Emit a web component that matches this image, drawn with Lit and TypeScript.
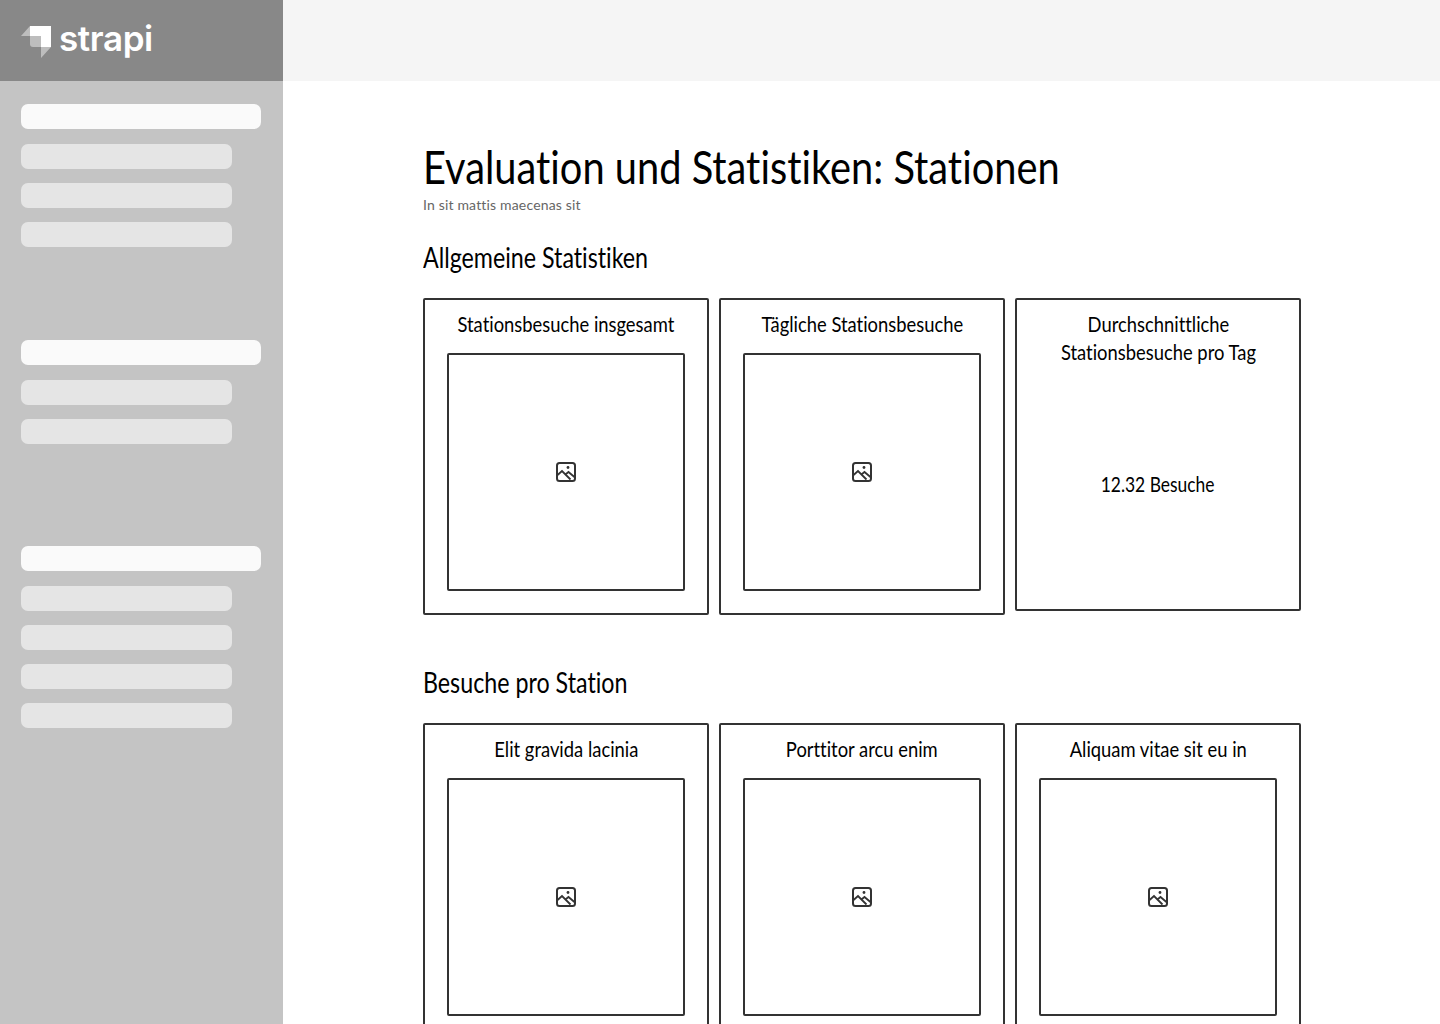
import { LitElement, html, css, svg } from "lit";
import { customElement } from "lit/decorators.js";

const imageIcon = svg`
  <svg class="icon" width="22" height="22" viewBox="0 0 22 22" fill="none" stroke="#333" stroke-width="2">
    <rect x="2" y="2" width="18" height="18" rx="2.5"></rect>
    <path d="M2 14.5 L7 10 L15.5 18.5 M11 13 L13.5 11 L20 16.5" stroke-width="1.8"></path>
    <circle cx="13" cy="6.5" r="1.4" fill="#333" stroke="none"></circle>
  </svg>
`;

type Card = { title: string; value?: string };

const general: Card[] = [
  { title: "Stationsbesuche insgesamt" },
  { title: "Tägliche Stationsbesuche" },
  { title: "Durchschnittliche\nStationsbesuche pro Tag", value: "12.32 Besuche" },
];

const perStation: Card[] = [
  { title: "Elit gravida lacinia" },
  { title: "Porttitor arcu enim" },
  { title: "Aliquam vitae sit eu in" },
];

@customElement("app-root")
export class AppRoot extends LitElement {
  static styles = css`
    :host {
      display: grid;
      grid-template-columns: 283px 1fr;
      grid-template-rows: 81px 1fr;
      height: 1024px;
      overflow: hidden;
      font-family: "Lato", "Noto Sans", sans-serif;
      font-variant-ligatures: none;
      color: #000;
      background: #fff;
    }
    .brand {
      display: flex;
      align-items: center;
      gap: 7px;
      padding: 0 0 5px 21px;
      background: #888;
    }
    .brand svg {
      margin-top: 10px;
    }
    .wordmark {
      font-family: "Inter", sans-serif;
      font-size: 35px;
      font-weight: 600;
      letter-spacing: -0.4px;
      line-height: 1;
      color: #fff;
    }
    .topbar {
      background: #f5f5f5;
    }
    .side {
      display: flex;
      flex-direction: column;
      padding: 23px 0 0 21px;
      background: #c4c4c4;
    }
    .group {
      display: flex;
      flex-direction: column;
      gap: 14px;
    }
    .group.second {
      margin-top: 93px;
    }
    .group.third {
      margin-top: 102px;
    }
    .bar {
      width: 211px;
      height: 25px;
      border-radius: 7px;
      background: #e5e5e5;
    }
    .bar.head {
      width: 240px;
      margin-bottom: 1px;
      background: #fafafa;
    }
    main {
      display: flex;
      flex-direction: column;
      width: 878px;
      padding: 61px 0 0 140px;
    }
    /* the reference hand font is much narrower than anything installed */
    h1 {
      margin: 0;
      font-size: 46px;
      font-weight: 400;
      line-height: 50px;
      white-space: nowrap;
      transform: scaleX(0.865);
      transform-origin: left;
    }
    .sub {
      margin-top: 3px;
      font-size: 14px;
      line-height: 20px;
      letter-spacing: 0.17px;
      color: #666;
    }
    h2 {
      margin: 22px 0 0;
      font-size: 28px;
      font-weight: 400;
      line-height: 40px;
      white-space: nowrap;
      transform: scaleX(0.83);
      transform-origin: left;
    }
    h2.next {
      margin-top: 47px;
    }
    .cards {
      display: grid;
      grid-template-columns: repeat(3, 286px);
      gap: 10px;
      align-items: start;
      margin-top: 21px;
    }
    .card {
      box-sizing: border-box;
      display: flex;
      flex-direction: column;
      align-items: center;
      height: 317px;
      padding: 10px 22px 0;
      border: 2px solid #333;
      border-radius: 2px;
    }
    .card.stat {
      height: 313px;
    }
    .title {
      font-size: 21px;
      line-height: 28px;
      text-align: center;
      white-space: pre;
      transform: scaleX(0.875);
    }
    .picture {
      box-sizing: border-box;
      display: flex;
      align-items: center;
      justify-content: center;
      width: 238px;
      height: 238px;
      margin-top: 15px;
      border: 2px solid #333;
      border-radius: 2px;
    }
    .value {
      margin-top: 104px;
      font-size: 21px;
      line-height: 28px;
      transform: scaleX(0.83);
    }
  `;

  private renderCard(card: Card) {
    if (card.value) {
      return html`
        <div class="card stat">
          <div class="title">${card.title}</div>
          <div class="value">${card.value}</div>
        </div>
      `;
    }
    return html`
      <div class="card">
        <div class="title">${card.title}</div>
        <div class="picture">${imageIcon}</div>
      </div>
    `;
  }

  render() {
    return html`
      <div class="brand">
        <svg width="31" height="36" viewBox="0 0 31 36">
          <path d="M9 1 H30 V22 H20 V11 H9 Z" fill="#fff"></path>
          <path d="M9 1 V11 H0 Z" fill="#fff" opacity="0.45"></path>
          <path d="M9 11 H20 V22 H12 Q9 22 9 19 Z" fill="#fff" opacity="0.45"></path>
          <path d="M20 22 H30 L20 33 Z" fill="#fff" opacity="0.45"></path>
        </svg>
        <span class="wordmark">strapi</span>
      </div>
      <div class="topbar"></div>
      <nav class="side">
        <div class="group">
          <div class="bar head"></div>
          <div class="bar"></div>
          <div class="bar"></div>
          <div class="bar"></div>
        </div>
        <div class="group second">
          <div class="bar head"></div>
          <div class="bar"></div>
          <div class="bar"></div>
        </div>
        <div class="group third">
          <div class="bar head"></div>
          <div class="bar"></div>
          <div class="bar"></div>
          <div class="bar"></div>
          <div class="bar"></div>
        </div>
      </nav>
      <main>
        <h1>Evaluation und Statistiken: Stationen</h1>
        <div class="sub">In sit mattis maecenas sit</div>
        <h2>Allgemeine Statistiken</h2>
        <div class="cards">${general.map((c) => this.renderCard(c))}</div>
        <h2 class="next">Besuche pro Station</h2>
        <div class="cards">${perStation.map((c) => this.renderCard(c))}</div>
      </main>
    `;
  }
}
